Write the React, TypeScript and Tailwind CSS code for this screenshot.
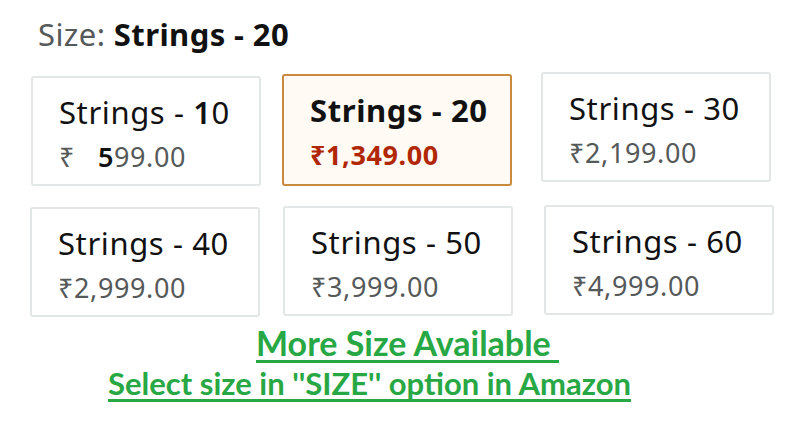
const font = { fontFamily: '"Noto Sans", "Open Sans", sans-serif' }

function Card({ className, children }: { className: string; children: React.ReactNode }) {
  return (
    <div className={`w-[230px] h-[110px] rounded-[3px] border-2 px-[26px] pt-[15px] ${className}`}>
      {children}
    </div>
  )
}

const Title = ({ children }: { children: React.ReactNode }) => (
  <div className="text-[31px] leading-[38px] tracking-[0.6px] text-[#111] whitespace-nowrap">{children}</div>
)

const Price = ({ children }: { children: React.ReactNode }) => (
  <div className="mt-[11px] text-[27px] leading-[30px] tracking-[0.6px] text-[#565959] whitespace-nowrap">{children}</div>
)

export default function App() {
  return (
    <div className="w-[800px] h-[430px] bg-white overflow-hidden relative" style={font}>
      <div className="pl-[38px] pt-[15px] text-[31px] leading-[38px] tracking-[0.4px] text-[#565959]">
        Size: <span className="font-bold text-[#111]">Strings - 20</span>
      </div>

      <div className="flex items-start pl-[31px] mt-[21px]">
        <Card className="border-[#e3e6e6] mt-[2px]">
          <Title>Strings - <span className="font-semibold">1</span>0</Title>
          <Price>₹&nbsp;&nbsp;&nbsp;<span className="font-semibold text-[#111]">5</span>99.00</Price>
        </Card>
        <Card className="ml-[21px] h-[112px] border-[#c98a3d] bg-[#fffaf3]">
          <Title><span className="font-bold">Strings - 20</span></Title>
          <Price><span className="font-bold text-[#b12704]">₹1,349.00</span></Price>
        </Card>
        <Card className="ml-[29px] -mt-[2px] border-[#e3e6e6] pt-[13px]">
          <Title>Strings - 30</Title>
          <Price>₹2,199.00</Price>
        </Card>
      </div>

      <div className="flex items-start pl-[30px] mt-[19px]">
        <Card className="border-[#e3e6e6] mt-[2px]">
          <Title>Strings - 40</Title>
          <Price>₹2,999.00</Price>
        </Card>
        <Card className="ml-[23px] mt-[1px] border-[#e3e6e6]">
          <Title>Strings - 50</Title>
          <Price>₹3,999.00</Price>
        </Card>
        <Card className="ml-[31px] border-[#e3e6e6]">
          <Title>Strings - 60</Title>
          <Price>₹4,999.00</Price>
        </Card>
      </div>

      <div
        className="flex flex-col font-bold text-[#27a844] underline decoration-[3px] underline-offset-[4px] [text-decoration-skip-ink:none]"
        style={{ fontFamily: 'Lato, "Open Sans", sans-serif' }}
      >
        <div className="pl-[256px] mt-[6px] text-[34px] leading-[40px] whitespace-pre">More Size Available </div>
        <div className="pl-[108px] mt-[2px] text-[31px] leading-[36px] whitespace-nowrap">Select size in ''SIZE'' option in Amazon</div>
      </div>
    </div>
  )
}
